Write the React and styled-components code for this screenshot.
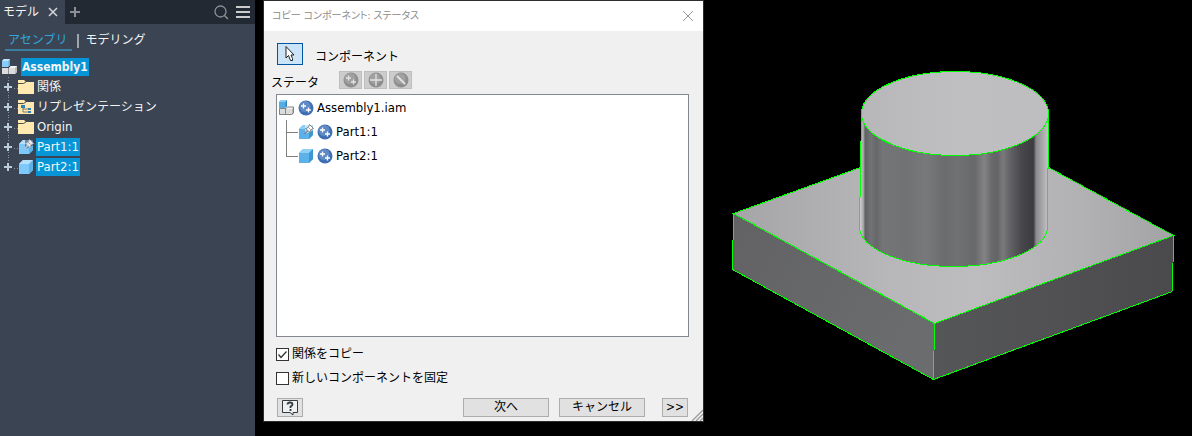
import React, { useState } from 'react';
import styled, { createGlobalStyle, css } from 'styled-components';

const GlobalStyle = createGlobalStyle`
  *, *::before, *::after { box-sizing: border-box; }
  body {
    margin: 0;
    background: #000;
    font-family: "DejaVu Sans Condensed", "Noto Sans CJK JP", sans-serif;
    font-size: 12px;
    line-height: 20px;
  }
  button { font: inherit; color: inherit; padding: 0; margin: 0; cursor: default; }
  ul { list-style: none; margin: 0; padding: 0; }
  svg { display: block; flex: none; }
`;

const Screen = styled.div`
  display: flex;
  align-items: flex-start;
  min-height: 100vh;
`;

/* ---------- model browser ---------- */

const Browser = styled.aside`
  flex: none;
  width: 255px;
  min-height: 100vh;
  margin-right: 8px;
  background: #3b4453;
  color: #f4f4f4;
`;

const TabBar = styled.header`
  display: flex;
  align-items: center;
  height: 24px;
  padding-right: 5px;
  background: #222933;
`;

const PanelTab = styled.div`
  display: flex;
  align-items: center;
  gap: 9px;
  width: 65px;
  height: 24px;
  padding-left: 3px;
  background: #3b4453;
`;

const IconButton = styled.button`
  display: grid;
  place-items: center;
  width: ${(p) => p.$size || 10}px;
  height: ${(p) => p.$size || 10}px;
  border: 0;
  background: none;
`;

const Tools = styled.div`
  display: flex;
  align-items: center;
  gap: 7px;
  margin-left: auto;
`;

const ViewTabs = styled.nav`
  display: flex;
  align-items: center;
  padding: 5px;
  height: 33px;
`;

const ViewTab = styled.a`
  height: 21px;
  padding: 0 5px 0 3px;
  color: ${(p) => (p.$active ? '#32a5dc' : '#f4f4f4')};
  border-bottom: 2px solid ${(p) => (p.$active ? '#3b7e9f' : 'transparent')};
  text-decoration: none;
`;

const Separator = styled.span`
  width: 2px;
  height: 14px;
  margin: 0 3px 0 5px;
  background: #a0a5ad;
`;

const RootNode = styled.div`
  display: flex;
  align-items: center;
  height: 20px;
  padding-left: 2px;
  gap: 3px;
`;

const Node = styled.li`
  display: flex;
  align-items: center;
  height: 20px;
  padding-left: 3px;
`;

const Expander = styled.button`
  display: block;
  width: 15px;
  height: 20px;
  border: 0;
  background: none;
`;

const NodeName = styled.span`
  height: 18px;
  line-height: 18px;
  padding: 0 1px;
  margin-left: ${(p) => (p.$root ? 0 : 2)}px;
  font-size: ${(p) => (p.$cjk || p.$root ? 12 : 13)}px;
  font-weight: ${(p) => (p.$root ? 700 : 400)};
  background: ${(p) => (p.$selected ? '#0696d7' : 'transparent')};
`;

/* ---------- dialog ---------- */

const Dialog = styled.section`
  position: relative;
  flex: none;
  width: 441px;
  border: 1px solid #2d2d2d;
  background: #f0f0f0;
  color: #000;
`;

const TitleBar = styled.header`
  display: flex;
  align-items: center;
  justify-content: space-between;
  height: 30px;
  padding: 0 9px 0 8px;
  background: #fff;
`;

const Title = styled.h1`
  margin: 0;
  font-size: 10px;
  font-weight: 400;
  font-feature-settings: "palt";
  color: #8c8c8c;
`;

const DialogBody = styled.div`
  padding: 12px 14px 4px 12px;
`;

const PickRow = styled.div`
  display: flex;
  align-items: flex-start;
  gap: 12px;
  height: 28px;
  padding-left: 1px;
`;

const PickButton = styled.button`
  display: grid;
  place-items: center;
  width: 26px;
  height: 22px;
  border: 1px solid #0054a0;
  background: #cce4f7;
`;

const PickLabel = styled.label`
  padding-top: 4px;
`;

const StatusRow = styled.div`
  display: flex;
  align-items: center;
  height: 23px;
  margin-left: -5px;
`;

const StatusLabel = styled.span`
  width: 68px;
`;

const StatusButton = styled.button`
  display: grid;
  place-items: center;
  width: 23px;
  height: 18px;
  margin: 0 2px 5px 0;
  border: 1px solid #bfbfbf;
  background: #ccc;
`;

const PartBox = styled.div`
  height: 243px;
  padding: 1px 2px;
  border: 1px solid #828790;
  background: #fff;
`;

const PartRow = styled.div`
  display: flex;
  align-items: center;
  gap: 3px;
  height: 24px;
  font-size: 13px;
`;

const Branch = styled.li`
  display: flex;
  height: 24px;
  padding-left: 7px;
`;

const Checks = styled.div`
  display: grid;
  gap: 4px;
  margin-top: 7px;
`;

const CheckLabel = styled.label`
  display: flex;
  align-items: center;
  gap: 3px;
  height: 20px;
`;

const CheckCell = styled.span`
  display: grid;
  & > * { grid-area: 1 / 1; }
  svg { pointer-events: none; }
`;

const CheckInput = styled.input`
  appearance: none;
  width: 13px;
  height: 13px;
  margin: 0;
  border: 1px solid #333;
  background: #fff;
`;

const Footer = styled.footer`
  display: flex;
  gap: 10px;
  margin-top: 10px;
  padding: 0 1px;
`;

const PushButton = styled.button`
  display: grid;
  place-items: center;
  width: ${(p) => (p.$small ? 26 : 86)}px;
  height: 19px;
  line-height: 17px;
  border: 1px solid #adadad;
  background: #e1e1e1;
  ${(p) => p.$help && css`margin-right: auto;`}
  ${(p) => p.$more && css`margin-left: 7px;`}
`;

const Grip = styled.svg`
  position: absolute;
  right: 0;
  bottom: 0;
`;

const Viewport = styled.main`
  flex: 1;
  min-width: 0;
  svg { width: 100%; height: 100vh; }
`;

/* ---------- icons ---------- */

const Cube = ({ pinned, flat }) => (
  <svg width="16" height="16" viewBox="0 0 16 16">
    <path d="M1 5 5 1H15V11L11 15H1Z" fill={flat ? '#5cb2e8' : '#7fc8fa'} />
    <path d="M1 5 5 1H15L11 5Z" fill={flat ? '#8fd0f6' : '#b5dffb'} />
    <path d="M11 5 15 1V11L11 15Z" fill={flat ? '#3d97d2' : '#5eb2ea'} />
    {pinned && (
      <g>
        <path d="M7 0H16V6L12 8 7 10Z" fill={flat ? '#fff' : '#3b4453'} opacity=".55" />
        <path d="M11.500 .5 15.500 4.500 14 5 12.500 6.500 12 8.500 10.200 6.700 7 10 6.500 9.500 9.500 6 7.500 4.500 9.500 4 11 2Z" fill={flat ? '#fff' : '#e8e8e8'} stroke={flat ? '#666' : '#b9bfc6'} strokeWidth=".8" />
        <path d="M10.500 3.500 12.500 5.500" stroke="#777" strokeWidth=".7" />
      </g>
    )}
  </svg>
);

const AssemblyIcon = ({ flat }) => (
  <svg width="16" height="16" viewBox="0 0 16 16">
    <path d="M0 2 2 0H8V6L6 8H0Z" fill={flat ? '#54aee6' : '#8bcbfa'} />
    <path d="M0 2 2 0H8L6.500 2Z" fill={flat ? '#8ccdf2' : '#c1e4fc'} />
    <path d="M6.500 2 8 0V6L6.500 8Z" fill={flat ? '#3382b6' : '#5baee8'} />
    <path d="M0 9H6.500V15H0Z" fill="#dcdcdc" />
    <path d="M7 9 9 7H15V13L13 15H7Z" fill="#dcdcdc" />
    <path d="M7 9 9 7H15L13 9Z" fill="#f6f6f6" />
    <path d="M13 9 15 7V13L13 15Z" fill="#bcbcbc" />
    {flat && <path d="M.5 8.500H6.500V14.500H.5ZM6.500 9 8.500 7H14.500V12.500L12.500 14.500H6.500" fill="none" stroke="#777" strokeWidth=".9" />}
  </svg>
);

const Folder = ({ tree }) => (
  <svg width="16" height="14" viewBox="0 0 16 14">
    <path d="M0 0H6L8 2H16V14H0Z" fill="#ffe9b0" />
    <path d="M0 3.500H5.500L8 2" fill="none" stroke="#4c4f50" strokeWidth="1" />
    {tree && (
      <g>
        <path d="M5 7V12H10M5 9H10" fill="none" stroke="#7d7866" />
        <path d="M3 5H7V8H3ZM10 8H13V10H10ZM10 11H13V13H10Z" fill="#3280b5" />
      </g>
    )}
  </svg>
);

const PlusBranch = ({ last }) => (
  <svg width="15" height="20" viewBox="0 0 15 20" shapeRendering="crispEdges">
    <path d={last ? 'M5.500 0V5' : 'M5.500 0V20'} stroke="#8b929c" strokeDasharray="1 2" />
    <path d="M1 10H10M5.500 6V14" stroke="#3b4453" strokeWidth="4" />
    <path d="M1 10H9M5 6V14" stroke="#bccbd9" strokeWidth="2" />
    <path d="M11 11.500H15" stroke="#8b929c" strokeDasharray="1 2" />
  </svg>
);

const StatusIcon = ({ kind = 'copy', disabled }) => (
  <svg width="16" height="16" viewBox="0 0 16 16">
    <circle cx="8" cy="8" r="7.500" fill={disabled ? '#8e8e8e' : '#3f70b3'} />
    <circle cx="7" cy="6.500" r="5.500" fill={disabled ? '#a0a0a0' : '#5f8ac5'} />
    <path
      d={{
        copy: 'M3 6H8M5.500 3.500V8.500M8 10H13M10.500 7.500V12.500',
        reuse: 'M2 8H14M8 2V14',
        exclude: 'M4 4 12 12',
      }[kind]}
      stroke={disabled ? '#e2e2e2' : '#fff'}
      strokeWidth={kind === 'exclude' ? 2 : 1.300}
    />
  </svg>
);

const PointerIcon = () => (
  <svg width="12" height="18" viewBox="0 0 12 18">
    <path d="M2 1.500V13L4.500 10.500 6.500 15.500H8.500V13.500L7 10H10Z" fill="#fff" stroke="#222" />
  </svg>
);

const HelpIcon = () => (
  <svg width="18" height="17" viewBox="0 0 18 17">
    <path d="M1.500 1.500H16.500V13.500H12V16L9 13.500H1.500Z" fill="#eef0f2" stroke="#333a40" />
    <path d="M6.500 5.500Q6.500 3.500 9 3.500T11.500 5.500Q11.500 6.500 9.500 7.500V9M9.500 10V12" fill="none" stroke="#333a40" strokeWidth="1.800" />
  </svg>
);

const Model = () => (
  <svg viewBox="704 0 488 436" role="img" aria-label="Assembly1">
    <defs>
      <linearGradient id="plate" x1="0" y1="0" x2="1" y2="0">
        <stop offset="0" stopColor="#a5a5a7" />
        <stop offset=".35" stopColor="#b7b7b9" />
        <stop offset=".55" stopColor="#bdbdbf" />
        <stop offset=".8" stopColor="#b1b1b3" />
        <stop offset="1" stopColor="#a3a3a5" />
      </linearGradient>
      <linearGradient id="leftFace" x1="0" y1="0" x2="1" y2=".5">
        <stop offset="0" stopColor="#626264" />
        <stop offset="1" stopColor="#6b6c6e" />
      </linearGradient>
      <linearGradient id="rightFace" x1="0" y1="0" x2="1" y2="0">
        <stop offset="0" stopColor="#555658" />
        <stop offset=".5" stopColor="#515153" />
        <stop offset="1" stopColor="#4a4a4c" />
      </linearGradient>
      <linearGradient id="cap" x1="0" y1="0" x2="1" y2="0">
        <stop offset="0" stopColor="#b7b7b9" />
        <stop offset=".5" stopColor="#bfbfc1" />
        <stop offset="1" stopColor="#bebec0" />
      </linearGradient>
      <linearGradient id="side" x1="0" y1="0" x2="1" y2="0">
        <stop offset="0" stopColor="#d4d4d6" />
        <stop offset=".02" stopColor="#a8a8aa" />
        <stop offset=".03" stopColor="#606163" />
        <stop offset=".06" stopColor="#727375" />
        <stop offset=".09" stopColor="#666769" />
        <stop offset=".12" stopColor="#747577" />
        <stop offset=".25" stopColor="#717274" />
        <stop offset=".35" stopColor="#78797b" />
        <stop offset=".45" stopColor="#6b6c6e" />
        <stop offset=".52" stopColor="#707173" />
        <stop offset=".61" stopColor="#68696b" />
        <stop offset=".66" stopColor="#838385" />
        <stop offset=".7" stopColor="#69696b" />
        <stop offset=".73" stopColor="#646466" />
        <stop offset=".76" stopColor="#7a7a7c" />
        <stop offset=".79" stopColor="#666668" />
        <stop offset=".86" stopColor="#47474b" />
        <stop offset=".92" stopColor="#3c3c40" />
        <stop offset=".935" stopColor="#8c8c8e" />
        <stop offset=".97" stopColor="#aaaaac" />
        <stop offset="1" stopColor="#c4c4c6" />
      </linearGradient>
    </defs>
    <path d="M733.500 213.500 860.500 167.500H1048.500L1173.500 235.500 934.500 323.500Z" fill="url(#plate)" />
    <path d="M733.500 213.500 934.500 323.500 933.500 379.500 732.500 269.500Z" fill="url(#leftFace)" />
    <path d="M934.500 323.500 1173.500 235.500 1172.500 291.500 933.500 379.500Z" fill="url(#rightFace)" />
    <path d="M861.500 113.500 859.500 226.500A94 40 0 0 0 1047.500 226.500L1048.500 113.500Z" fill="url(#side)" />
    <ellipse cx="955" cy="113.500" rx="93.500" ry="42" fill="url(#cap)" />
    <g fill="none" stroke="#0f0" shapeRendering="crispEdges">
      <path d="M860.500 167.500 733.500 213.500 934.500 323.500 1173.500 235.500 1048.500 167.500" />
      <path d="M733.500 213.500 732.500 269.500 933.500 379.500 1172.500 291.500 1173.500 235.500M934.500 323.500 933.500 379.500" />
      <ellipse cx="955" cy="113.500" rx="93.500" ry="42" />
      <path d="M861.500 113.500 859.500 226.500A94 40 0 0 0 1047.500 226.500L1048.500 113.500" />
    </g>
  </svg>
);

const nodes = [
  { name: '関係', cjk: true, icon: <Folder /> },
  { name: 'リプレゼンテーション', cjk: true, icon: <Folder tree /> },
  { name: 'Origin', icon: <Folder /> },
  { name: 'Part1:1', selected: true, icon: <Cube pinned /> },
  { name: 'Part2:1', selected: true, icon: <Cube /> },
];

function Check({ label, initial }) {
  const [on, setOn] = useState(initial);
  return (
    <CheckLabel>
      <CheckCell>
        <CheckInput type="checkbox" checked={on} onChange={() => setOn(!on)} />
        {on && (
          <svg width="13" height="13" viewBox="0 0 13 13">
            <path d="M2.500 6.500 5 9.500 10.500 3.500" fill="none" stroke="#333" strokeWidth="1.300" />
          </svg>
        )}
      </CheckCell>
      {label}
    </CheckLabel>
  );
}

export default function App() {
  return (
    <Screen>
      <GlobalStyle />
      <Browser>
        <TabBar>
          <PanelTab>
            モデル
            <IconButton aria-label="閉じる">
              <svg width="10" height="10" viewBox="0 0 10 10"><path d="M1 1 9 9M9 1 1 9" stroke="#d5d7da" strokeWidth="1.500" /></svg>
            </IconButton>
          </PanelTab>
          <IconButton $size={20} aria-label="追加">
            <svg width="10" height="10" viewBox="0 0 10 10"><path d="M0 5H10M5 0V10" stroke="#8c9095" strokeWidth="2" /></svg>
          </IconButton>
          <Tools>
            <IconButton $size={15} aria-label="検索">
              <svg width="15" height="15" viewBox="0 0 15 15"><circle cx="6.500" cy="6.500" r="5.500" fill="none" stroke="#8c9095" strokeWidth="1.300" /><path d="M10.500 10.500 14 14" stroke="#8c9095" strokeWidth="1.500" /></svg>
            </IconButton>
            <IconButton $size={14} aria-label="メニュー">
              <svg width="14" height="12" viewBox="0 0 14 12"><path d="M0 1H14M0 6H14M0 11H14" stroke="#ccc" strokeWidth="2" /></svg>
            </IconButton>
          </Tools>
        </TabBar>
        <ViewTabs>
          <ViewTab href="#assembly" $active>アセンブリ</ViewTab>
          <Separator />
          <ViewTab href="#modeling">モデリング</ViewTab>
        </ViewTabs>
        <RootNode>
          <AssemblyIcon />
          <NodeName $root $selected>Assembly1</NodeName>
        </RootNode>
        <ul>
          {nodes.map((n, i) => (
            <Node key={n.name}>
              <Expander aria-label={`${n.name} を展開`}><PlusBranch last={i === nodes.length - 1} /></Expander>
              {n.icon}
              <NodeName $cjk={n.cjk} $selected={n.selected}>{n.name}</NodeName>
            </Node>
          ))}
        </ul>
      </Browser>

      <Dialog role="dialog" aria-labelledby="dialog-title">
        <TitleBar>
          <Title id="dialog-title">コピー コンポーネント: ステータス</Title>
          <IconButton $size={12} aria-label="閉じる">
            <svg width="12" height="12" viewBox="0 0 12 12"><path d="M1 1 11 11M11 1 1 11" stroke="#999" /></svg>
          </IconButton>
        </TitleBar>
        <DialogBody>
          <PickRow>
            <PickButton id="pick"><PointerIcon /></PickButton>
            <PickLabel htmlFor="pick">コンポーネント</PickLabel>
          </PickRow>
          <StatusRow>
            <StatusLabel>ステータ</StatusLabel>
            <StatusButton disabled aria-label="コピー"><StatusIcon disabled /></StatusButton>
            <StatusButton disabled aria-label="再使用"><StatusIcon disabled kind="reuse" /></StatusButton>
            <StatusButton disabled aria-label="除外"><StatusIcon disabled kind="exclude" /></StatusButton>
          </StatusRow>
          <PartBox>
            <PartRow><AssemblyIcon flat /><StatusIcon />Assembly1.iam</PartRow>
            <ul>
              {['Part1:1', 'Part2:1'].map((name, i) => (
                <Branch key={name}>
                  <svg width="12" height="24" viewBox="0 0 12 24" shapeRendering="crispEdges">
                    <path d={i ? 'M.5 0V12.500H12' : 'M.5 0V24M0 12.500H12'} fill="none" stroke="#808080" />
                  </svg>
                  <PartRow><Cube flat pinned={i === 0} /><StatusIcon />{name}</PartRow>
                </Branch>
              ))}
            </ul>
          </PartBox>
          <Checks>
            <Check label="関係をコピー" initial />
            <Check label="新しいコンポーネントを固定" initial={false} />
          </Checks>
          <Footer>
            <PushButton $small $help aria-label="ヘルプ"><HelpIcon /></PushButton>
            <PushButton>次へ</PushButton>
            <PushButton>キャンセル</PushButton>
            <PushButton $small $more>&gt;&gt;</PushButton>
          </Footer>
        </DialogBody>
        <Grip width="12" height="12" viewBox="0 0 12 12">
          <path d="M1 12 12 1M5 12 12 5M9 12 12 9" stroke="#999" strokeWidth="1.300" />
        </Grip>
      </Dialog>

      <Viewport><Model /></Viewport>
    </Screen>
  );
}
